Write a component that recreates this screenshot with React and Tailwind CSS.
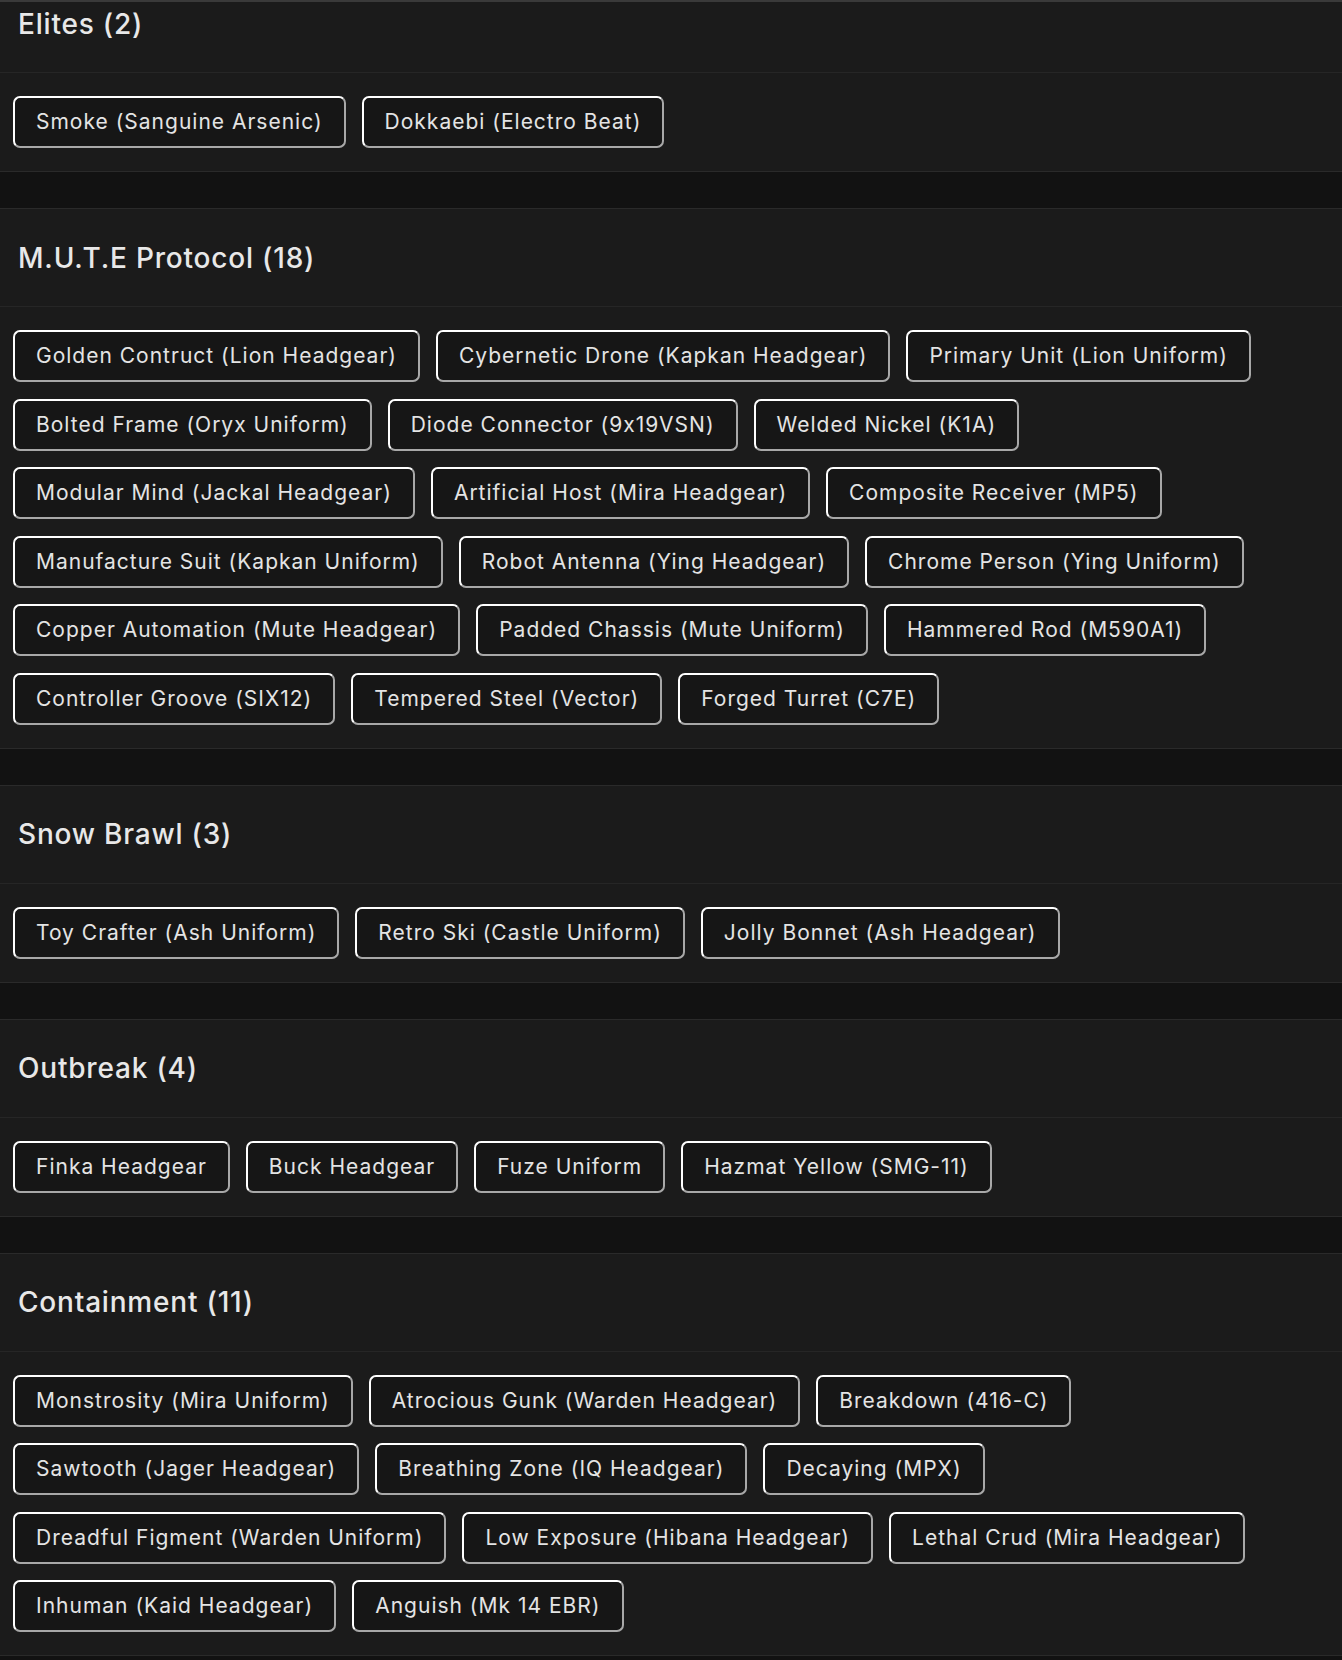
import React from 'react';

const sections = [
  { title: 'Elites', items: ['Smoke (Sanguine Arsenic)', 'Dokkaebi (Electro Beat)'] },
  {
    title: 'M.U.T.E Protocol',
    items: [
      'Golden Contruct (Lion Headgear)',
      'Cybernetic Drone (Kapkan Headgear)',
      'Primary Unit (Lion Uniform)',
      'Bolted Frame (Oryx Uniform)',
      'Diode Connector (9x19VSN)',
      'Welded Nickel (K1A)',
      'Modular Mind (Jackal Headgear)',
      'Artificial Host (Mira Headgear)',
      'Composite Receiver (MP5)',
      'Manufacture Suit (Kapkan Uniform)',
      'Robot Antenna (Ying Headgear)',
      'Chrome Person (Ying Uniform)',
      'Copper Automation (Mute Headgear)',
      'Padded Chassis (Mute Uniform)',
      'Hammered Rod (M590A1)',
      'Controller Groove (SIX12)',
      'Tempered Steel (Vector)',
      'Forged Turret (C7E)',
    ],
  },
  {
    title: 'Snow Brawl',
    items: ['Toy Crafter (Ash Uniform)', 'Retro Ski (Castle Uniform)', 'Jolly Bonnet (Ash Headgear)'],
  },
  {
    title: 'Outbreak',
    items: ['Finka Headgear', 'Buck Headgear', 'Fuze Uniform', 'Hazmat Yellow (SMG-11)'],
  },
  {
    title: 'Containment',
    items: [
      'Monstrosity (Mira Uniform)',
      'Atrocious Gunk (Warden Headgear)',
      'Breakdown (416-C)',
      'Sawtooth (Jager Headgear)',
      'Breathing Zone (IQ Headgear)',
      'Decaying (MPX)',
      'Dreadful Figment (Warden Uniform)',
      'Low Exposure (Hibana Headgear)',
      'Lethal Crud (Mira Headgear)',
      'Inhuman (Kaid Headgear)',
      'Anguish (Mk 14 EBR)',
    ],
  },
];

function Section({ title, items }) {
  return (
    <div className="bg-[#1b1b1b] border-y border-[#2a2a2a]">
      <div className="h-[98px] flex items-center px-[18px] border-b border-[#262626]">
        <h2 className="text-[28px] font-medium tracking-[0.8px] text-[#e8e8e8] leading-none">
          {title} ({items.length})
        </h2>
      </div>
      <div className="flex flex-wrap gap-x-4 gap-y-[16.5px] px-[13px] py-[23px]">
        {items.map((item) => (
          <button
            key={item}
            className="px-[21px] py-[10px] text-[21px] leading-[28px] tracking-[1px] text-[#e4e4e4] bg-[#161616] rounded-[7px] border-2 border-white border-r-[#a8a8a8] border-b-[#a8a8a8] whitespace-nowrap"
          >
            {item}
          </button>
        ))}
      </div>
    </div>
  );
}

export default function App() {
  return (
    <div className="relative min-h-[1660px] bg-[#121212] overflow-hidden font-['Inter','Noto_Sans',sans-serif] [font-feature-settings:'calt'_0]">
      <div className="absolute top-0 left-0 right-0 h-[2px] bg-[#3a3a3a] z-10" />
      <div className="flex flex-col gap-[36px] -mt-[26px]">
        {sections.map((s) => (
          <Section key={s.title} title={s.title} items={s.items} />
        ))}
      </div>
    </div>
  );
}
